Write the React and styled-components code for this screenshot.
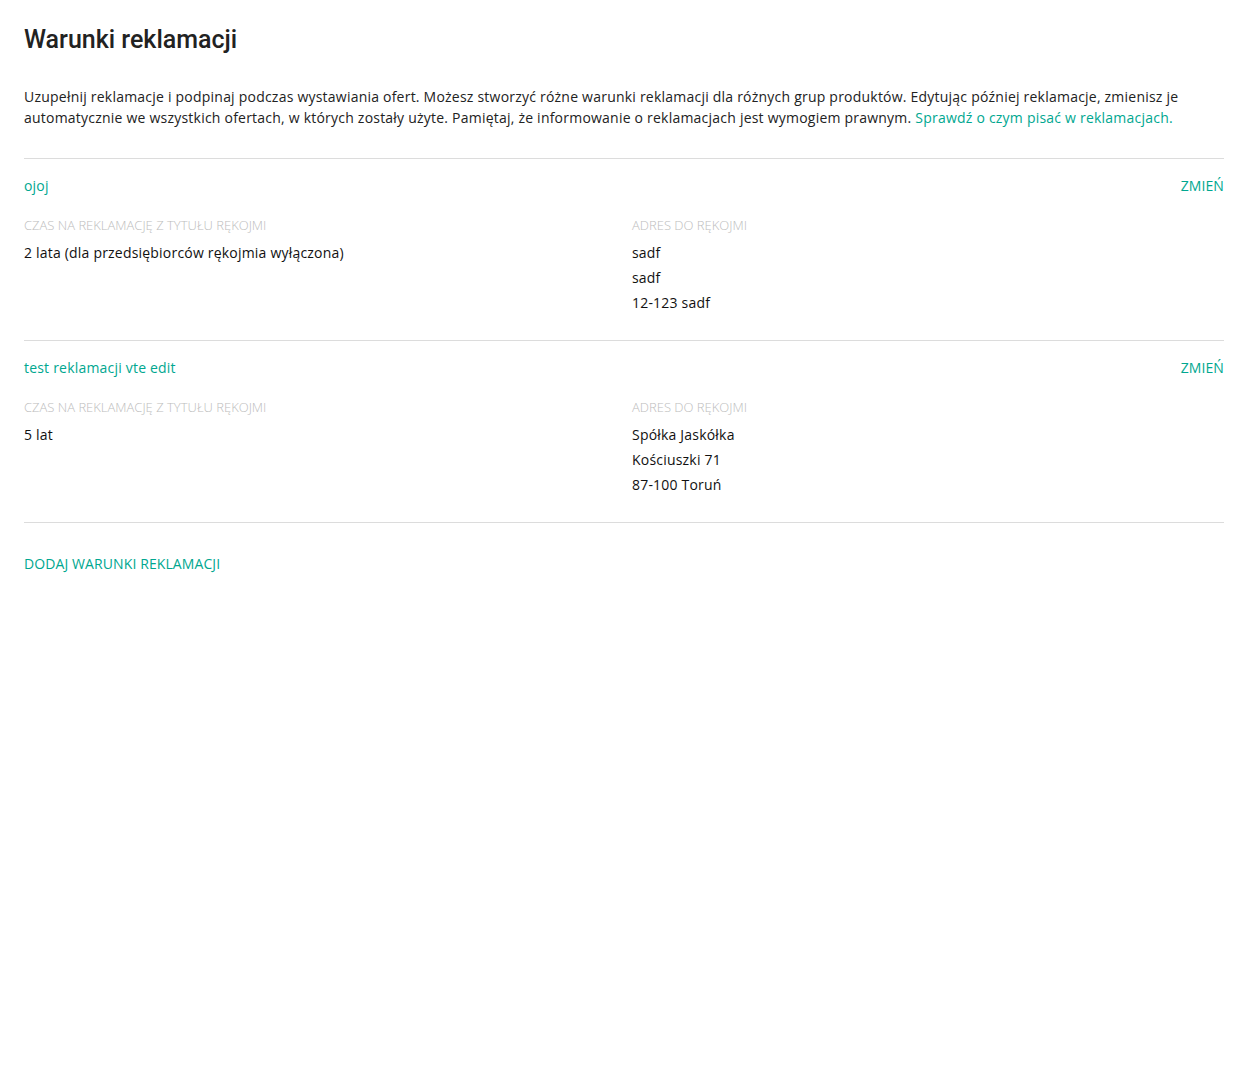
import React from "react";
import styled, { createGlobalStyle } from "styled-components";

const Global = createGlobalStyle`
  html, body { margin: 0; padding: 0; background: #fff; }
  body { font-family: "Open Sans", "Liberation Sans", sans-serif; color: #222; }
`;

const TEAL = "#00a790";

const Page = styled.div`
  padding: 24px 24px;
`;

const Title = styled.h1`
  margin: 0;
  font-family: Roboto, "Liberation Sans", sans-serif;
  font-weight: 500;
  font-size: 25px;
  line-height: 32px;
  color: #222;
`;

const Intro = styled.p`
  margin: 30px 0 30px;
  font-size: 14px;
  line-height: 21px;
  letter-spacing: 0.22px;
  color: #222;
`;

const Link = styled.a`
  color: ${TEAL};
  text-decoration: none;
  cursor: pointer;
`;

const Section = styled.section`
  border-top: 1px solid #dcdcdc;
  padding: 16px 0 25px;
`;

const Header = styled.div`
  display: flex;
  justify-content: space-between;
  align-items: center;
  font-size: 14px;
  line-height: 21px;
  letter-spacing: 0.2px;
`;

const Action = styled.a`
  color: ${TEAL};
  text-transform: uppercase;
  font-size: 14px;
  letter-spacing: 0.1px;
  cursor: pointer;
`;

const Columns = styled.div`
  display: grid;
  grid-template-columns: 1fr 1fr;
  column-gap: 16px;
  margin-top: 20px;
`;

const Label = styled.div`
  font-size: 13px;
  font-weight: 300;
  line-height: 18px;
  color: #bdbdbd;
  text-transform: uppercase;
  margin-bottom: 6px;
`;

const Value = styled.div`
  font-size: 14px;
  line-height: 25px;
  letter-spacing: 0.2px;
  color: #111;
`;

const Footer = styled.div`
  border-top: 1px solid #dcdcdc;
  padding-top: 30px;
  font-size: 14px;
  line-height: 21px;
`;

const items = [
  {
    name: "ojoj",
    time: "2 lata (dla przedsiębiorców rękojmia wyłączona)",
    address: ["sadf", "sadf", "12-123 sadf"],
  },
  {
    name: "test reklamacji vte edit",
    time: "5 lat",
    address: ["Spółka Jaskółka", "Kościuszki 71", "87-100 Toruń"],
  },
];

export default function App() {
  return (
    <>
      <Global />
      <Page>
        <Title>Warunki reklamacji</Title>
        <Intro>
          Uzupełnij reklamacje i podpinaj podczas wystawiania ofert. Możesz stworzyć różne warunki
          reklamacji dla różnych grup produktów. Edytując później reklamacje, zmienisz je
          automatycznie we wszystkich ofertach, w których zostały użyte. Pamiętaj, że informowanie
          o reklamacjach jest wymogiem prawnym. <Link>Sprawdź o czym pisać w reklamacjach.</Link>
        </Intro>
        {items.map((it) => (
          <Section key={it.name}>
            <Header>
              <Link>{it.name}</Link>
              <Action>Zmień</Action>
            </Header>
            <Columns>
              <div>
                <Label>Czas na reklamację z tytułu rękojmi</Label>
                <Value>{it.time}</Value>
              </div>
              <div>
                <Label>Adres do rękojmi</Label>
                {it.address.map((a, i) => (
                  <Value key={i}>{a}</Value>
                ))}
              </div>
            </Columns>
          </Section>
        ))}
        <Footer>
          <Action>Dodaj warunki reklamacji</Action>
        </Footer>
      </Page>
    </>
  );
}
